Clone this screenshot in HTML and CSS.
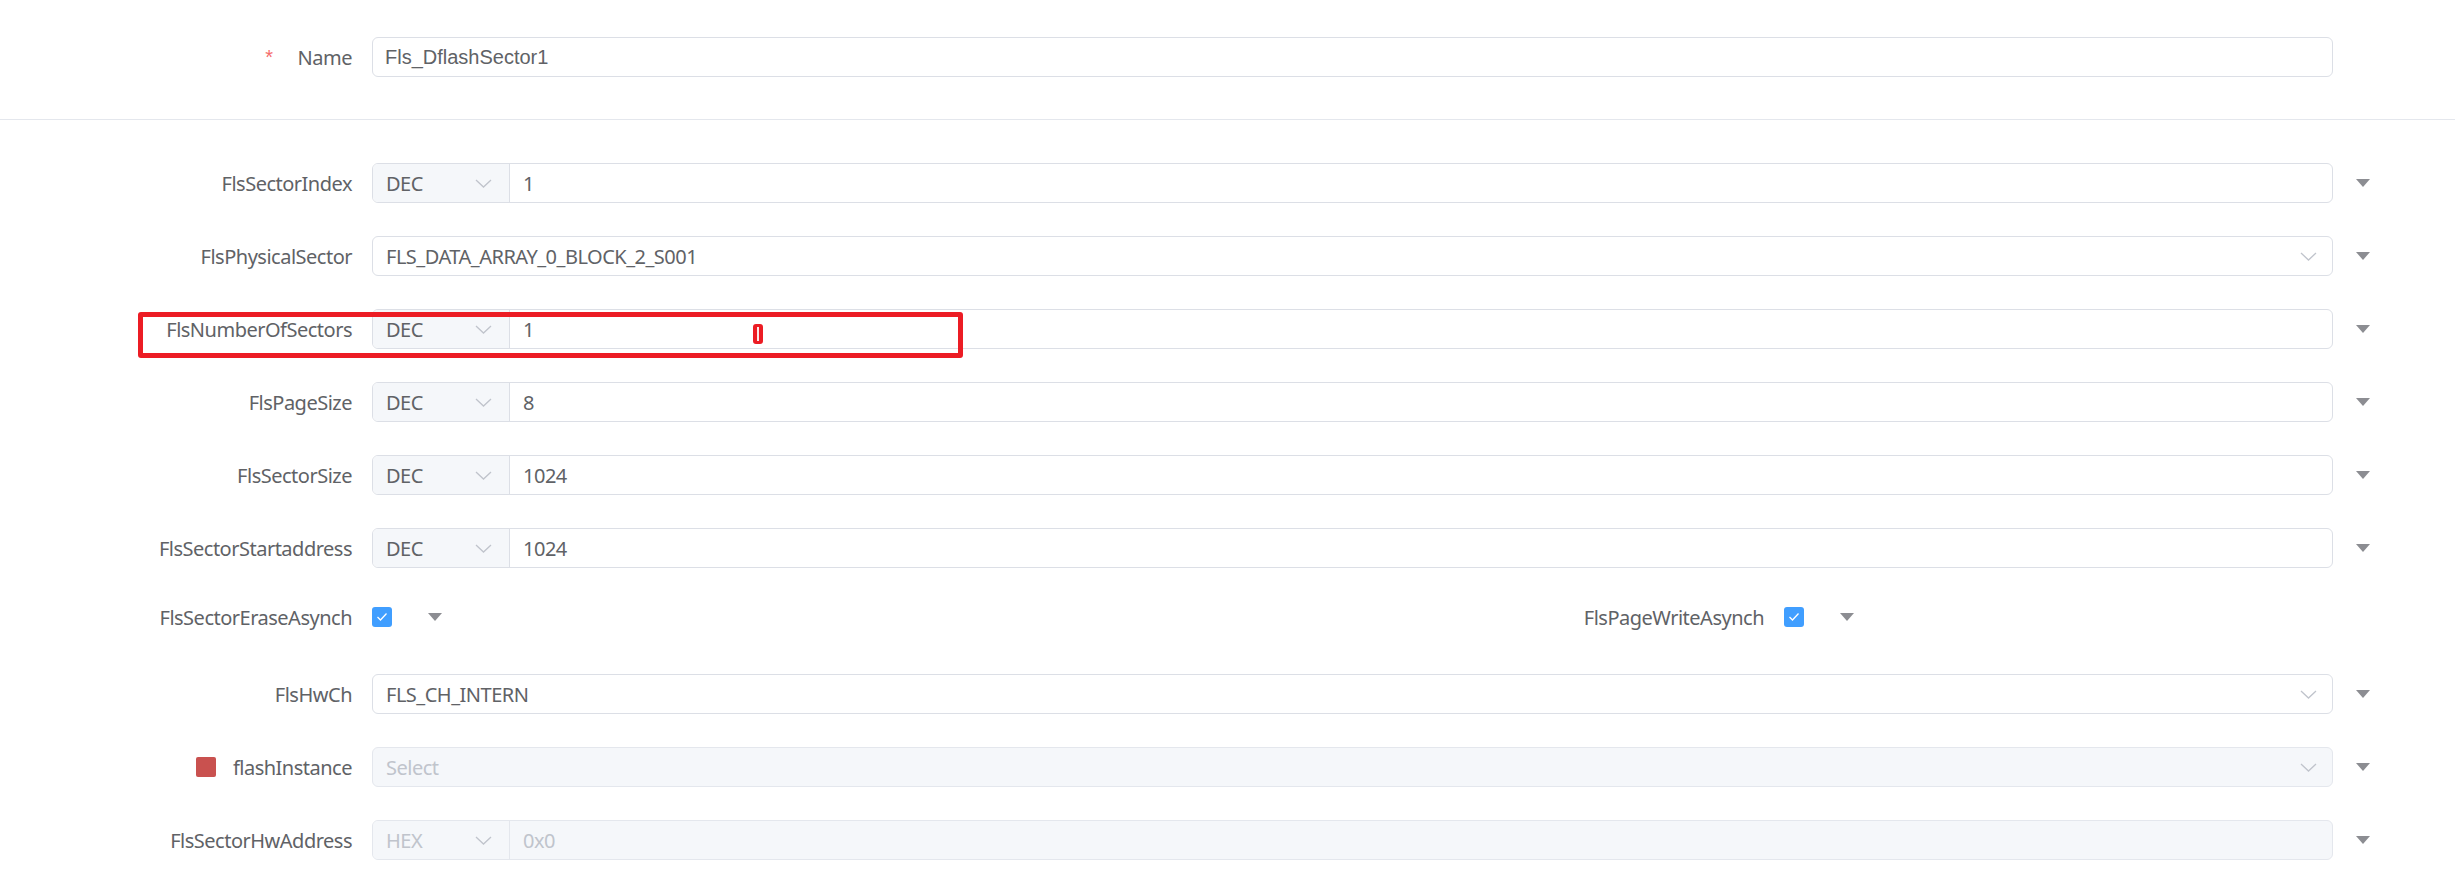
FILE: index.html
```html
<!DOCTYPE html>
<html lang="en">
<head>
    <meta charset="UTF-8">
    <title>Fls Sector</title>
    <link rel="stylesheet" href="styles.css">
</head>
<body>

<div class="head">
    <div class="item">
        <label class="item-label"><span class="req">*</span>Name</label>
        <div class="field name-field"><span>Fls_DflashSector1</span></div>
    </div>
</div>

<div class="rows">
    <div class="item">
        <label class="item-label">FlsSectorIndex</label>
        <div class="field">
            <div class="prefix"><span>DEC</span><svg class="chevron" width="17" height="9" viewBox="0 0 17 9"><polyline points="1,1 8.5,8 16,1"/></svg></div>
            <span class="value">1</span>
        </div>
        <span class="more"></span>
    </div>

    <div class="item">
        <label class="item-label">FlsPhysicalSector</label>
        <div class="field select">
            <span class="value">FLS_DATA_ARRAY_0_BLOCK_2_S001</span>
            <svg class="chevron" width="17" height="9" viewBox="0 0 17 9"><polyline points="1,1 8.5,8 16,1"/></svg>
        </div>
        <span class="more"></span>
    </div>

    <div class="item">
        <label class="item-label">FlsNumberOfSectors</label>
        <div class="field">
            <div class="prefix"><span>DEC</span><svg class="chevron" width="17" height="9" viewBox="0 0 17 9"><polyline points="1,1 8.5,8 16,1"/></svg></div>
            <span class="value">1</span>
        </div>
        <span class="more"></span>
        <div class="highlight"></div>
        <div class="caret-mark"></div>
    </div>

    <div class="item">
        <label class="item-label">FlsPageSize</label>
        <div class="field">
            <div class="prefix"><span>DEC</span><svg class="chevron" width="17" height="9" viewBox="0 0 17 9"><polyline points="1,1 8.5,8 16,1"/></svg></div>
            <span class="value">8</span>
        </div>
        <span class="more"></span>
    </div>

    <div class="item">
        <label class="item-label">FlsSectorSize</label>
        <div class="field">
            <div class="prefix"><span>DEC</span><svg class="chevron" width="17" height="9" viewBox="0 0 17 9"><polyline points="1,1 8.5,8 16,1"/></svg></div>
            <span class="value">1024</span>
        </div>
        <span class="more"></span>
    </div>

    <div class="item">
        <label class="item-label">FlsSectorStartaddress</label>
        <div class="field">
            <div class="prefix"><span>DEC</span><svg class="chevron" width="17" height="9" viewBox="0 0 17 9"><polyline points="1,1 8.5,8 16,1"/></svg></div>
            <span class="value">1024</span>
        </div>
        <span class="more"></span>
    </div>

    <div class="check-row">
        <div class="item">
            <label class="item-label">FlsSectorEraseAsynch</label>
            <span class="checkbox"><svg width="12" height="10" viewBox="0 0 12 10"><polyline points="1.5,5 4.5,8 10.5,1.5"/></svg></span>
            <span class="more check-more"></span>
        </div>
        <div class="item">
            <label class="item-label">FlsPageWriteAsynch</label>
            <span class="checkbox"><svg width="12" height="10" viewBox="0 0 12 10"><polyline points="1.5,5 4.5,8 10.5,1.5"/></svg></span>
            <span class="more check-more"></span>
        </div>
    </div>

    <div class="item">
        <label class="item-label">FlsHwCh</label>
        <div class="field select">
            <span class="value">FLS_CH_INTERN</span>
            <svg class="chevron" width="17" height="9" viewBox="0 0 17 9"><polyline points="1,1 8.5,8 16,1"/></svg>
        </div>
        <span class="more"></span>
    </div>

    <div class="item">
        <label class="item-label"><span class="swatch"></span>flashInstance</label>
        <div class="field select disabled">
            <span class="value placeholder">Select</span>
            <svg class="chevron" width="17" height="9" viewBox="0 0 17 9"><polyline points="1,1 8.5,8 16,1"/></svg>
        </div>
        <span class="more"></span>
    </div>

    <div class="item">
        <label class="item-label">FlsSectorHwAddress</label>
        <div class="field disabled">
            <div class="prefix"><span>HEX</span><svg class="chevron" width="17" height="9" viewBox="0 0 17 9"><polyline points="1,1 8.5,8 16,1"/></svg></div>
            <span class="value">0x0</span>
        </div>
        <span class="more"></span>
    </div>
</div>

</body>
</html>
```

FILE: styles.css
```css
body {
    margin: 0;
    font-family: "Noto Sans", "Open Sans", sans-serif;
    font-size: 20px;
    letter-spacing: -0.5px;
    color: #606266;
    background-color: #fff;
}

.head {
    padding: 37px 0 42px;
    border-bottom: 1px solid #e4e7ed;
}

.rows {
    display: flex;
    flex-direction: column;
    gap: 33px;
    padding-top: 43px;
}

.item {
    display: flex;
    align-items: center;
    height: 40px;
    position: relative;
}

.item-label {
    width: 372px;
    flex-shrink: 0;
    box-sizing: border-box;
    padding-right: 20px;
    display: flex;
    justify-content: flex-end;
    align-items: center;
    white-space: nowrap;
}

.req {
    color: #f56c6c;
    font-family: "Liberation Sans", Arial, sans-serif;
    margin-right: 25px;
}

.swatch {
    width: 20px;
    height: 20px;
    border-radius: 2px;
    background-color: #c9514f;
    margin-right: 17px;
}

.field {
    width: 1961px;
    height: 40px;
    flex-shrink: 0;
    box-sizing: border-box;
    border: 1px solid #dcdfe6;
    border-radius: 6px;
    display: flex;
    align-items: center;
    overflow: hidden;
}

.name-field {
    font-family: "Liberation Sans", Arial, sans-serif;
    font-size: 20px;
    letter-spacing: 0;
    padding-left: 12px;
}

.prefix {
    width: 137px;
    height: 100%;
    box-sizing: border-box;
    display: flex;
    align-items: center;
    justify-content: space-between;
    padding: 0 17px 0 13px;
    background-color: #f5f7fa;
    border-right: 1px solid #dcdfe6;
}

.value {
    padding-left: 13px;
}

.select {
    justify-content: space-between;
    padding-right: 15px;
}

.chevron polyline {
    fill: none;
    stroke: #c0c4cc;
    stroke-width: 1.3;
}

.disabled {
    background-color: #f5f7fa;
    border-color: #e4e7ed;
    color: #c0c4cc;
}

.disabled .prefix {
    border-right-color: #e4e7ed;
}

.more {
    margin-left: 23px;
    width: 0;
    height: 0;
    border-left: 7px solid transparent;
    border-right: 7px solid transparent;
    border-top: 8px solid #8c8d92;
}

.check-row {
    display: grid;
    grid-template-columns: 1412px auto;
    align-items: start;
    height: 40px;
}

.check-row .item {
    height: 32px;
}

.checkbox {
    width: 20px;
    height: 20px;
    border-radius: 3px;
    background-color: #409eff;
    display: flex;
    align-items: center;
    justify-content: center;
}

.checkbox polyline {
    fill: none;
    stroke: #fff;
    stroke-width: 1.3;
}

.check-more {
    margin-left: 36px;
}

/* annotation drawn over the row */
.highlight {
    position: absolute;
    left: 138px;
    top: 3px;
    width: 825px;
    height: 46px;
    box-sizing: border-box;
    border: 5px solid #ec1c24;
    border-radius: 3px;
}

.caret-mark {
    position: absolute;
    left: 753px;
    top: 15px;
    width: 10px;
    height: 20px;
    box-sizing: border-box;
    border-radius: 3px;
    border: 4px solid #ec1c24;
    border-top-width: 3px;
    border-bottom-width: 3px;
    background-color: #fde8e9;
}
```
